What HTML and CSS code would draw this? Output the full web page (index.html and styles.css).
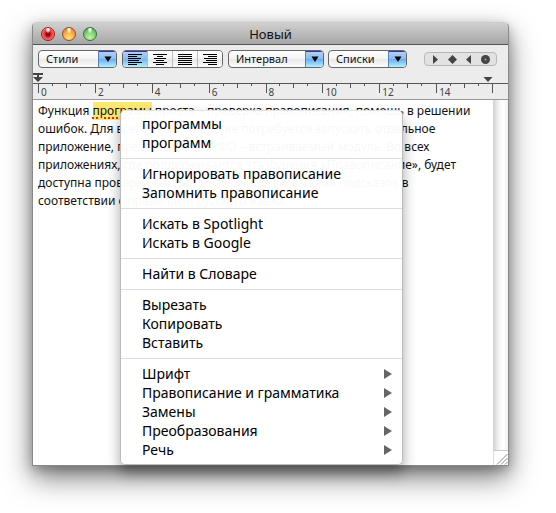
FILE: index.html
```html
<!DOCTYPE html>
<html lang="ru">
<head>
<meta charset="utf-8">
<title>Новый</title>
<link rel="stylesheet" href="styles.css">
</head>
<body>
<main class="window">
  <header class="titlebar">
    <div class="lights">
      <button class="light red" aria-label="Закрыть"></button>
      <button class="light amber" aria-label="Свернуть"></button>
      <button class="light green" aria-label="Развернуть"></button>
    </div>
    <h1>Новый</h1>
  </header>
  <div class="toolbar">
    <div class="combo styles"><select aria-label="Стили"><option>Стили</option></select><span class="cap"><svg width="8" height="6" viewBox="0 0 8 6"><path d="M0.5 0.5h7L4 6z"/></svg></span></div>
    <div class="segments">
      <button class="on" aria-label="По левому краю"><svg width="14" height="11" viewBox="0 0 14 11"><path d="M0 .5h14M0 2.5h9M0 4.5h13M0 6.5h11M0 8.5h14M0 10.5h9"/></svg></button>
      <button aria-label="По центру"><svg width="14" height="11" viewBox="0 0 14 11"><path d="M0 .5h14M4 2.5h6M1 4.5h12M3 6.5h8M0 8.5h14M3 10.5h8"/></svg></button>
      <button aria-label="По ширине"><svg width="14" height="11" viewBox="0 0 14 11"><path d="M0 .5h14M0 2.5h14M0 4.5h14M0 6.5h14M0 8.5h14M0 10.5h14"/></svg></button>
      <button aria-label="По правому краю"><svg width="14" height="11" viewBox="0 0 14 11"><path d="M0 .5h14M5 2.5h9M1 4.5h13M3 6.5h11M0 8.5h14M5 10.5h9"/></svg></button>
    </div>
    <div class="combo spacing"><select aria-label="Интервал"><option>Интервал</option></select><span class="cap"><svg width="8" height="6" viewBox="0 0 8 6"><path d="M0.5 0.5h7L4 6z"/></svg></span></div>
    <div class="combo lists"><select aria-label="Списки"><option>Списки</option></select><span class="cap"><svg width="8" height="6" viewBox="0 0 8 6"><path d="M0.5 0.5h7L4 6z"/></svg></span></div>
    <div class="tabs">
      <svg width="9" height="9" viewBox="0 0 9 9"><path d="M2 0l5 4.5L2 9z"/></svg>
      <svg width="9" height="9" viewBox="0 0 9 9"><path d="M4.500 0L9 4.500 4.500 9 0 4.500z"/></svg>
      <svg width="9" height="9" viewBox="0 0 9 9"><path d="M7 0v9L2 4.500z"/></svg>
      <svg width="9" height="9" viewBox="0 0 9 9"><circle cx="4.500" cy="4.500" r="4.500"/><circle class="dot" cx="4.500" cy="4.500" r="1"/></svg>
    </div>
  </div>
  <div class="markers">
    <svg width="10" height="10" viewBox="0 0 10 10"><path d="M0 0h10v2H6v2h4L5 9 0 4h4V2H0z"/></svg>
    <svg width="10" height="10" viewBox="0 0 10 10"><path d="M0.500 4h9L5 9z"/></svg>
  </div>
  <div class="ruler">
    <span>0</span><span>2</span><span>4</span><span>6</span><span>8</span><span>10</span><span>12</span><span>14</span>
  </div>
  <section class="document">
    <div class="page">
      <p>Функция <mark><span>програмы</span></mark> проста – проверка правописания, помощь в решении<br>
      ошибок. Для всего этого лично не потребуется запускать отдельное<br>
      приложение, представлена ОРФО – встраиваемый модуль. Во всех<br>
      приложениях, где поддерживается эта функция «Правописание», будет<br>
      доступна проверка текста с возможностью выдачи подсказок в<br>
      соответствии с правилами русского языка.</p>
    </div>
    <div class="scroll">
      <div class="track"></div>
      <svg width="14" height="14" viewBox="0 0 14 14"><path d="M3 13.500L13.500 3M7 13.500L13.500 7M11 13.500L13.500 11"/></svg>
    </div>
  </section>
  <nav class="menu" aria-label="Контекстное меню">
    <ul>
      <li><button>программы</button></li>
      <li><button>программ</button></li>
    </ul>
    <ul>
      <li><button>Игнорировать правописание</button></li>
      <li><button>Запомнить правописание</button></li>
    </ul>
    <ul>
      <li><button>Искать в Spotlight</button></li>
      <li><button>Искать в Google</button></li>
    </ul>
    <ul>
      <li><button>Найти в Словаре</button></li>
    </ul>
    <ul>
      <li><button>Вырезать</button></li>
      <li><button>Копировать</button></li>
      <li><button>Вставить</button></li>
    </ul>
    <ul>
      <li><button>Шрифт<svg width="8" height="10" viewBox="0 0 8 10"><path d="M0 0l8 5-8 5z"/></svg></button></li>
      <li><button>Правописание и грамматика<svg width="8" height="10" viewBox="0 0 8 10"><path d="M0 0l8 5-8 5z"/></svg></button></li>
      <li><button>Замены<svg width="8" height="10" viewBox="0 0 8 10"><path d="M0 0l8 5-8 5z"/></svg></button></li>
      <li><button>Преобразования<svg width="8" height="10" viewBox="0 0 8 10"><path d="M0 0l8 5-8 5z"/></svg></button></li>
      <li><button>Речь<svg width="8" height="10" viewBox="0 0 8 10"><path d="M0 0l8 5-8 5z"/></svg></button></li>
    </ul>
  </nav>
</main>
</body>
</html>
```
FILE: styles.css
```css
* { box-sizing: border-box; }

body {
  margin: 0;
  min-height: 100vh;
  padding: 22px 47px 47px 32px;
  display: flex;
  background: #fff;
  color: #111;
  font-family: "Noto Sans", "Open Sans", sans-serif;
  font-size: 12px;
}

button, select { font: inherit; color: inherit; }

.window {
  position: relative;
  flex: 1;
  min-width: 0;
  display: flex;
  flex-direction: column;
  border: 1px solid #8a8a8a;
  border-top-color: #ccc;
  border-radius: 5px 5px 0 0;
  background: #ececec;
  box-shadow: 0 12px 28px rgba(0, 0, 0, .5), 0 4px 12px rgba(0, 0, 0, .25);
}

.titlebar {
  height: 22px;
  display: grid;
  grid-template-columns: 1fr auto 1fr;
  align-items: center;
  padding: 0 8px;
  border-bottom: 1px solid #555;
  border-radius: 4px 4px 0 0;
  background: linear-gradient(#d0d0d0, #a6a6a6);
}
.titlebar h1 { margin: 0; font-size: 13px; line-height: 20px; font-weight: 400; }

.lights { display: flex; gap: 7px; }
.light {
  width: 14px;
  height: 14px;
  padding: 0;
  border: 1px solid #6b3a30;
  border-radius: 50%;
}
.red { background: radial-gradient(ellipse at 50% 10%, #fff 0 8%, transparent 30%), radial-gradient(circle, #8c0008 0 22%, #ee2a30 38%, #ff8a84 80%); border-color: #8e1c1c; }
.amber { background: radial-gradient(ellipse at 50% 10%, #fff 0 8%, transparent 30%), radial-gradient(circle at 50% 80%, #ffe37a, #f4a03a 60%, #d9662a); border-color: #9c4a22; }
.green { background: radial-gradient(ellipse at 50% 10%, #fff 0 8%, transparent 30%), radial-gradient(circle at 50% 80%, #c4f5a0, #74c868 60%, #3c8c40); border-color: #38703a; }

.toolbar {
  display: flex;
  align-items: center;
  padding: 5px 11px 5px 5px;
}

.combo {
  display: grid;
  grid-template-columns: 1fr 18px;
  height: 18px;
  border: 1px solid #666;
  border-radius: 4px;
  background: linear-gradient(#fff, #f4f4f4 50%, #e8e8e8 50%, #fcfcfc);
  overflow: hidden;
}
.combo select {
  grid-area: 1 / 1 / 2 / 3;
  width: 100%;
  height: 16px;
  padding: 0 20px 0 7px;
  border: 0;
  background: none;
  appearance: none;
  font-size: 11px;
  line-height: 16px;
}
.cap {
  grid-area: 1 / 2;
  display: grid;
  place-items: center;
  border-left: 1px solid #5a7fc0;
  box-shadow: inset 0 1px #3a34a0;
  background: linear-gradient(#b4d2f4, #8cbcf0 50%, #64acf0 50%, #b4f0ff);
  pointer-events: none;
}
.styles { width: 79px; margin-right: 5px; }
.spacing { width: 96px; margin-right: 4px; }
.lists { width: 79px; margin-right: auto; }

.segments {
  display: flex;
  width: 101px;
  height: 18px;
  margin-right: 5px;
  border: 1px solid #666;
  border-radius: 4px;
  overflow: hidden;
}
.segments button {
  flex: 1;
  display: grid;
  place-items: center;
  padding: 0;
  border: 0;
  border-left: 1px solid #bbb;
  background: linear-gradient(#fff, #f4f4f4 50%, #e8e8e8 50%, #fcfcfc);
}
.segments .on { border-left: 0; background: linear-gradient(#b4d2f4, #8cbcf0 50%, #74b4f0 50%, #b4f0ff); box-shadow: inset 0 1px #3a34a0; }
.segments path { stroke: #000; }

.tabs {
  display: flex;
  align-items: center;
  justify-content: space-between;
  width: 73px;
  height: 14px;
  padding: 0 6px;
  border: 1px solid #b8b8b8;
  border-radius: 4px;
  background: #e2e2e2;
  fill: #444;
}
.dot { fill: #aaa; }

.markers {
  display: flex;
  justify-content: space-between;
  height: 10px;
  padding-right: 15px;
  fill: #444;
}

.ruler {
  display: grid;
  grid-template-columns: repeat(8, 1fr);
  height: 17px;
  padding: 0 15px 0 5px;
  border-top: 1px solid #555;
  border-bottom: 1px solid #999;
  font-size: 10px;
  line-height: 17px;
  color: #444;
}
.ruler span {
  padding-left: 3px;
  background:
    linear-gradient(#555, #555) 0 0 / 1px 9px no-repeat,
    linear-gradient(#555, #555) 25% 0 / 1px 2px no-repeat,
    linear-gradient(#555, #555) 50% 0 / 1px 4px no-repeat,
    linear-gradient(#555, #555) 75% 0 / 1px 2px no-repeat;
}
.ruler span:last-child {
  background:
    linear-gradient(#555, #555) 0 0 / 1px 9px no-repeat,
    linear-gradient(#555, #555) 25% 0 / 1px 2px no-repeat,
    linear-gradient(#555, #555) 50% 0 / 1px 4px no-repeat,
    linear-gradient(#555, #555) 75% 0 / 1px 2px no-repeat,
    linear-gradient(#555, #555) 100% 0 / 1px 9px no-repeat;
}

.document { flex: 1; display: flex; background: #fff; }
.page { flex: 1; min-width: 0; padding: 2px 5px; white-space: nowrap; }
.page p { margin: 0; line-height: 18px; }
mark { display: inline-block; height: 18px; background: #fbe873; color: inherit; }
mark span { text-decoration: underline dotted #e02818 2px; text-underline-offset: 2px; }

.scroll { width: 15px; display: flex; flex-direction: column; }
.track {
  flex: 1;
  border-bottom: 1px solid #ccc;
  background: linear-gradient(90deg, #d2d2d2, #f4f4f4 40%, #fff 65%, #f2f2f2);
}
.scroll svg { border-left: 1px solid #ddd; width: 15px; stroke: #888; fill: none; }

.menu {
  position: absolute;
  top: 87px;
  left: 87px;
  width: 283px;
  padding: 3px 0 5px;
  border: 1px solid #bbb;
  border-top-color: #e4e4e4;
  border-radius: 5px;
  background: rgba(255, 255, 255, .97);
  box-shadow: 0 8px 14px rgba(0, 0, 0, .34);
  color: #000;
  font-size: 14px;
}
.menu ul { margin: 0; padding: 0; list-style: none; }
.menu ul + ul { margin-top: 6px; padding-top: 5px; border-top: 1px solid #ddd; }
.menu button {
  display: flex;
  align-items: center;
  justify-content: space-between;
  width: 100%;
  height: 19px;
  padding: 0 10px 0 21px;
  border: 0;
  background: none;
  line-height: 19px;
  text-align: left;
}
.menu svg { fill: #666; }
```
